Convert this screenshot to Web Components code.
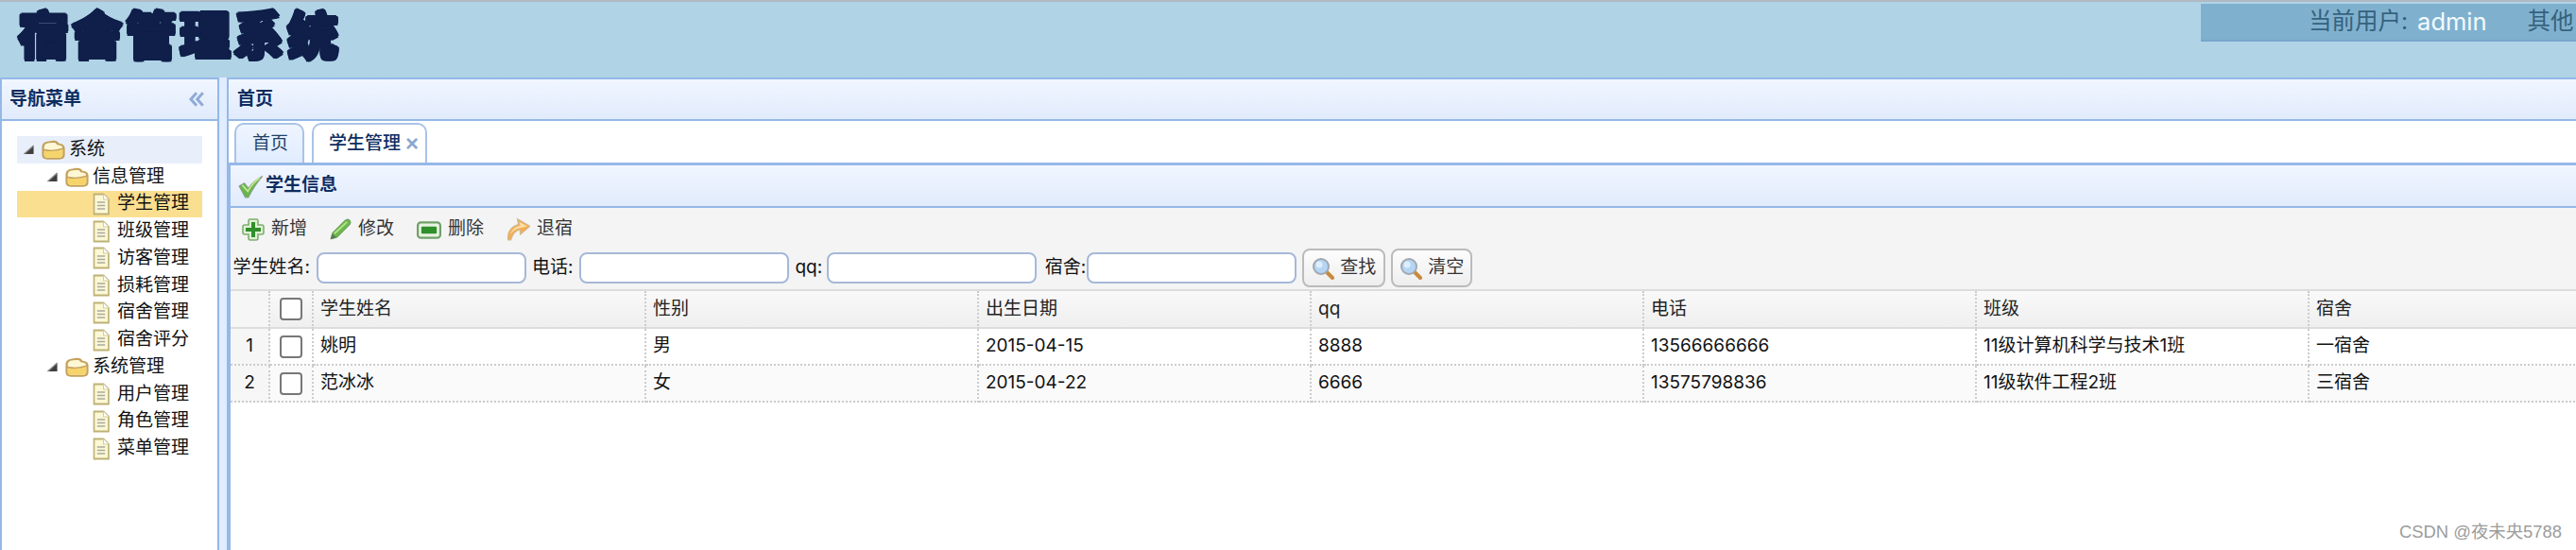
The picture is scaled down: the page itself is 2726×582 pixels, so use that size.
<!DOCTYPE html>
<html lang="zh">
<head>
<meta charset="utf-8">
<title>宿舍管理系统</title>
<style>
  html, body { margin: 0; height: 582px; overflow: hidden; }
  body {
    background: #e0ecff;
    color: #111;
    font: 19px/1.2 Inter, "Noto Sans CJK SC", sans-serif;
  }
  #page { display: flex; flex-direction: column; height: 582px; width: 2726px; overflow: hidden; position: relative; }
  #main { display: flex; gap: 8px; flex: 1; min-height: 0; }
</style>
</head>
<body>
<div id="page">
  <dorm-header></dorm-header>
  <div id="main">
    <panel-box heading="导航菜单" collapse style="width:232px">
      <tree-box>
        <tree-row kind="folder" depth="0" hover>系统</tree-row>
        <tree-row kind="folder" depth="1">信息管理</tree-row>
        <tree-row selected>学生管理</tree-row>
        <tree-row>班级管理</tree-row>
        <tree-row>访客管理</tree-row>
        <tree-row>损耗管理</tree-row>
        <tree-row>宿舍管理</tree-row>
        <tree-row>宿舍评分</tree-row>
        <tree-row kind="folder" depth="1">系统管理</tree-row>
        <tree-row>用户管理</tree-row>
        <tree-row>角色管理</tree-row>
        <tree-row>菜单管理</tree-row>
      </tree-box>
    </panel-box>
    <panel-box heading="首页" open-right style="flex:1;min-width:0">
      <tab-strip>
        <tab-item>首页</tab-item>
        <tab-item active closable>学生管理</tab-item>
      </tab-strip>
      <student-page></student-page>
    </panel-box>
  </div>
  <water-mark>CSDN @夜未央5788</water-mark>
</div>

<script>
(function () {
  // every icon sits in a 24x24 box, ui-icon scales it with its width/height attributes
  const icons = {
    arrow: '<path d="M23 2 L23 22 L1 22 Z" fill="#3f3f3f"/><path d="M23 2 L1 22" stroke="#8f8f8f" stroke-width="3"/>',
    folder: `<path d="M1.5 9 Q1.5 4 6 3 L12 2 Q15.5 2 16.5 5 L19 5.5 Q22.5 6.5 22.5 10 L22.5 18 Q22.5 22.5 18 22.5 L6 22.5 Q1.5 22.5 1.5 18 Z" fill="#fdf7d4" stroke="#c4a05a" stroke-width="2.2"/>
             <path d="M2.5 13 Q12 15 21.5 11 L21.5 18 Q21.5 21.5 18 21.5 L6 21.5 Q2.5 21.5 2.5 18 Z" fill="#f5d46c"/>
             <path d="M2 12 Q12 14.5 22 10.5" fill="none" stroke="#c4a05a" stroke-width="1.6"/>`,
    file: `<path d="M3 1.5 H15 L21.5 7 V22.5 H3 Z" fill="#fcf8d4" stroke="#bdb177" stroke-width="2"/>
           <path d="M15 1.5 V7 H21.5" fill="#fff" stroke="#d5cc9c" stroke-width="1.2"/>
           <path d="M7 10 H17 M7 13.5 H17 M7 17 H17" stroke="#a9a9a0" stroke-width="1.4"/>`,
    check: `<path d="M1 12 L6 9 L10 14 Q15 7 24 2 Q16 11 10 23 L7 23 Z" fill="#66b64c" stroke="#8a9f8a" stroke-width="1"/>
            <path d="M4 11 L9.5 17 Q14 9 21 4" fill="none" stroke="#c6e88a" stroke-width="1.6"/>`,
    plus: `<path d="M8 1 H16 Q17 1 17 3 V7 H21 Q23 7 23 9 V15 Q23 17 21 17 H17 V21 Q17 23 15 23 H9 Q7 23 7 21 V17 H3 Q1 17 1 15 V9 Q1 7 3 7 H7 V3 Q7 1 8 1 Z" fill="#dff0d4" stroke="#7fae70" stroke-width="1.6"/>
           <path d="M10 4 H14 V10 H20 V14 H14 V20 H10 V14 H4 V10 H10 Z" fill="#2f8f2a"/>`,
    pencil: `<path d="M1 23 L3 16 L17 2 Q20 0 22 2 Q24 5 22 7 L8 21 Z" fill="#6cb84e" stroke="#6c9a5c" stroke-width="1"/>
             <path d="M5 17 L19 4" stroke="#b7e08a" stroke-width="2"/>
             <path d="M1 23 L3 17 L7 21 Z" fill="#5b7a52"/>`,
    minus: `<rect x="1" y="5" width="22" height="15" rx="3" fill="#e8f3e2" stroke="#6fa066" stroke-width="2"/>
            <rect x="4.5" y="9" width="15" height="7" rx="1" fill="#2f8f2a"/>`,
    back: `<path d="M1.5 23 Q0 11 12 7 L11 1.5 L24 9 L14 17.5 L13.5 12.5 Q7 14 4.5 23 Z" fill="#f3ae55" stroke="#cdbb98" stroke-width="1"/>
           <path d="M3.5 18 Q6 10 14 8.5 L13 4.5 L21 9 L15 10.5 Q8 11 3.5 18 Z" fill="#fbdfa6"/>`,
    search: `<path d="M15 15 L22 22" stroke="#c98a3c" stroke-width="4" stroke-linecap="round"/>
             <circle cx="10" cy="10" r="8" fill="#b5d5f4" stroke="#a0a8b0" stroke-width="2"/>
             <circle cx="8" cy="8" r="3.5" fill="#dfeefc"/>`,
    collapse: `<path d="M12 3 L4 12 L12 21 M21 3 L13 12 L21 21" fill="none" stroke="#8fabd8" stroke-width="4"/>`
  };

  class UiIcon extends HTMLElement {
    connectedCallback() {
      const w = this.getAttribute('w') || 24;
      const h = this.getAttribute('h') || w;
      const root = this.attachShadow({mode: 'open'});
      root.innerHTML = `<style>:host { display: inline-flex; flex: none; } svg { display: block; }</style>
        <svg width="${w}" height="${h}" viewBox="0 0 24 24" preserveAspectRatio="none"
             xmlns="http://www.w3.org/2000/svg">${icons[this.getAttribute('name')] || ''}</svg>`;
    }
  }

  class DormHeader extends HTMLElement {
    constructor() {
      super();
      this.attachShadow({mode: 'open'}).innerHTML = `
        <style>
          :host {
            display: flex; flex: none; height: 80px;
            border-top: 2px solid #b1b9c3; background: #b0d3e6;
          }
          .logo {
            margin: 2px 0 0 19px; height: 70px; line-height: 70px; white-space: nowrap;
            font-family: "Liberation Sans", "Noto Sans CJK SC", sans-serif;
            font-size: 54px; font-weight: 900; letter-spacing: 3px; color: #0f1f4a;
            /* fat rounded letters, a text stroke would leave spikes here */
            text-shadow: 2px 0 #0f1f4a, -2px 0 #0f1f4a, 0 2px #0f1f4a, 0 -2px #0f1f4a,
              1.5px 1.5px #0f1f4a, -1.5px -1.5px #0f1f4a, 1.5px -1.5px #0f1f4a, -1.5px 1.5px #0f1f4a;
          }
          .user {
            margin: 2px 0 0 auto; box-sizing: border-box; width: 397px; height: 40px; padding-left: 114px;
            display: flex; align-items: center; white-space: nowrap; overflow: hidden;
            background: #7fb1cf; border-bottom: 2px solid #78a5cd; font-size: 24.5px; color: #36617d;
          }
          .name { color: #f3fbff; margin-left: 10px; font-size: 25.5px; }
          .other { margin-left: 43px; }
        </style>
        <div class="logo">宿舍管理系统</div>
        <div class="user"><span>当前用户:</span><span class="name">admin</span><span class="other">其他</span></div>`;
    }
  }

  const panelTpl = document.createElement('template');
  panelTpl.innerHTML = `
    <style>
      :host {
        display: flex; flex-direction: column; box-sizing: border-box; height: 100%; min-height: 0;
        border: 2px solid #95b8e7; border-bottom: 0; background: #fff; overflow: hidden;
      }
      :host([open-right]) { border-right: 0; }
      .head {
        flex: none; box-sizing: border-box; height: 44px; padding: 0 13px 0 8px;
        display: flex; align-items: center; justify-content: space-between;
        background: linear-gradient(#f1f6ff, #e1ebfc); border-bottom: 2px solid #95b8e7;
        font-weight: 700; color: #0e2d5f;
      }
      :host([open-right]) .head { padding-left: 9px; }
      .body { flex: 1; min-height: 0; display: flex; flex-direction: column; }
    </style>
    <div class="head"><span id="t"></span><ui-icon id="c" name="collapse" w="18" hidden></ui-icon></div>
    <div class="body"><slot></slot></div>`;

  class PanelBox extends HTMLElement {
    constructor() {
      super();
      this.attachShadow({mode: 'open'}).appendChild(panelTpl.content.cloneNode(true));
    }
    connectedCallback() {
      this.shadowRoot.getElementById('t').textContent = this.getAttribute('heading');
      if (!this.hasAttribute('collapse')) this.shadowRoot.getElementById('c').remove();
    }
  }

  class TreeBox extends HTMLElement {
    constructor() {
      super();
      this.attachShadow({mode: 'open'}).innerHTML = `
        <style>:host { display: block; padding: 16px 16px 0 16px; }</style><slot></slot>`;
    }
  }

  class TreeRow extends HTMLElement {
    connectedCallback() {
      const folder = this.getAttribute('kind') === 'folder';
      const depth = +this.getAttribute('depth') || 0;
      const lead = folder
        ? `<ui-icon name="arrow" w="11" class="a"></ui-icon><ui-icon name="folder" w="25" h="21" class="f"></ui-icon>`
        : `<ui-icon name="file" w="20" h="24" class="d"></ui-icon>`;
      this.attachShadow({mode: 'open'}).innerHTML = `
        <style>
          :host {
            display: flex; align-items: center; height: 28.75px; white-space: nowrap;
            padding-left: ${folder ? 7 + depth * 25 : 79}px;
          }
          :host([selected]) { background: #fbdf90; }
          :host([hover]) { background: #e8effb; }
          .a { margin-right: 8px; }
          .f { margin-right: 4px; }
          .d { margin-right: 7px; }
        </style>${lead}<slot></slot>`;
    }
  }

  class TabStrip extends HTMLElement {
    constructor() {
      super();
      this.attachShadow({mode: 'open'}).innerHTML = `
        <style>
          :host {
            display: flex; flex: none; gap: 8px; box-sizing: border-box; height: 47px;
            padding: 2px 0 0 6px; border-bottom: 3px solid #95b8e7;
          }
        </style><slot></slot>`;
    }
  }

  class TabItem extends HTMLElement {
    connectedCallback() {
      const close = this.hasAttribute('closable') ? '<span class="x">×</span>' : '';
      this.attachShadow({mode: 'open'}).innerHTML = `
        <style>
          :host {
            display: flex; align-items: center; box-sizing: border-box; height: 42px; padding: 0 15px 0 17px;
            border: 2px solid #a9c3e8; border-bottom: 0; border-radius: 10px 10px 0 0; white-space: nowrap;
            background: linear-gradient(#eff5ff, #e0ecff); color: #1f3f66;
          }
          :host([active]) { background: #fff; color: #0e2d5f; font-weight: 500; padding: 0 7px 0 16px; }
          .x {
            margin-left: 5px; color: #8aa7cf; font-weight: 700; line-height: 1;
            font-family: "Liberation Sans", sans-serif; font-size: 24px;
          }
        </style><slot></slot>${close}`;
    }
  }

  class ToolBtn extends HTMLElement {
    connectedCallback() {
      this.attachShadow({mode: 'open'}).innerHTML = `
        <style>
          :host { display: inline-flex; align-items: center; gap: 7px; color: #333; white-space: nowrap; }
        </style>
        <ui-icon name="${this.getAttribute('icon')}" w="${this.getAttribute('w') || 24}"></ui-icon><slot></slot>`;
    }
  }

  class SearchBtn extends HTMLElement {
    connectedCallback() {
      this.attachShadow({mode: 'open'}).innerHTML = `
        <style>
          :host {
            display: inline-flex; align-items: center; gap: 6px; box-sizing: border-box; height: 41px; padding: 0 8px;
            border: 2px solid #bbb; border-radius: 8px; color: #333; white-space: nowrap;
            background: linear-gradient(#fdfdfd, #eeeeee);
          }
        </style><ui-icon name="search"></ui-icon><slot></slot>`;
    }
  }

  class SearchField extends HTMLElement {
    connectedCallback() {
      this.attachShadow({mode: 'open'}).innerHTML = `
        <style>
          :host { display: inline-flex; align-items: center; gap: var(--label-gap, 7px); white-space: nowrap; }
          input {
            box-sizing: border-box; width: 222px; height: 33px; padding: 0 6px; margin: 0; outline: 0;
            border: 2px solid #a6b8d8; border-radius: 8px; background: #fff; font: inherit;
          }
        </style><slot></slot><input type="text">`;
    }
  }

  const pageTpl = document.createElement('template');
  pageTpl.innerHTML = `
    <style>
      :host {
        display: flex; flex-direction: column; flex: 1; min-height: 0;
        border-left: 2px solid #95b8e7;
      }
      .head {
        flex: none; box-sizing: border-box; height: 45px; padding-left: 8px; display: flex; align-items: center; gap: 3px;
        background: linear-gradient(#f1f6ff, #e1ebfc); border-bottom: 2px solid #95b8e7;
        font-weight: 700; color: #0e2d5f;
      }
      .tools { flex: none; box-sizing: border-box; height: 86px; padding-top: 2px; background: #f4f4f4; }
      .row1 { display: flex; align-items: center; gap: 24px; height: 41px; padding-left: 12px; }
      .row2 { display: flex; align-items: center; gap: 6px; height: 41px; padding-left: 2.5px; }
      .row2 .f4 { margin-left: 2.5px; }
      #grid-wrap { flex: 1; min-height: 0; }
    </style>
    <div class="head"><ui-icon name="check" w="26"></ui-icon><span>学生信息</span></div>
    <div class="tools">
      <div class="row1">
        <tool-btn icon="plus">新增</tool-btn>
        <tool-btn icon="pencil" w="23">修改</tool-btn>
        <tool-btn icon="minus" w="26">删除</tool-btn>
        <tool-btn icon="back" w="25">退宿</tool-btn>
      </div>
      <div class="row2">
        <search-field>学生姓名:</search-field>
        <search-field>电话:</search-field>
        <search-field style="--label-gap:5px">qq:</search-field>
        <search-field class="f4" style="--label-gap:1px">宿舍:</search-field>
        <search-btn>查找</search-btn>
        <search-btn style="padding:0 7px">清空</search-btn>
      </div>
    </div>
    <data-grid id="grid-wrap"></data-grid>`;

  class StudentPage extends HTMLElement {
    constructor() {
      super();
      this.attachShadow({mode: 'open'}).appendChild(pageTpl.content.cloneNode(true));
    }
  }

  const columns = ['学生姓名', '性别', '出生日期', 'qq', '电话', '班级', '宿舍'];
  const students = [
    ['姚明', '男', '2015-04-15', '8888', '13566666666', '11级计算机科学与技术1班', '一宿舍'],
    ['范冰冰', '女', '2015-04-22', '6666', '13575798836', '11级软件工程2班', '三宿舍']
  ];

  class DataGrid extends HTMLElement {
    connectedCallback() {
      const box = '<span class="cb"></span>';
      const head = `<div class="c n h"></div><div class="c k h">${box}</div>` +
        columns.map(t => `<div class="c h">${t}</div>`).join('');
      const rows = students.map((r, i) =>
        `<div class="c n r${i}">${i + 1}</div><div class="c k r${i}">${box}</div>` +
        r.map(t => `<div class="c r${i}">${t}</div>`).join('')).join('');
      this.attachShadow({mode: 'open'}).innerHTML = `
        <style>
          :host { display: block; overflow: hidden; border-top: 2px solid #ddd; }
          .g {
            display: grid; width: max-content;
            grid-template-columns: 42px 46px repeat(7, 352px);
            grid-auto-rows: 39px; grid-template-rows: 40px;
          }
          .c {
            box-sizing: border-box; display: flex; align-items: center; padding-left: 7px; white-space: nowrap;
            border-right: 2px dotted #ccc; border-bottom: 2px dotted #ccc;
          }
          .h { background: linear-gradient(#f9f9f9, #efefef); border-bottom: 2px solid #ddd; color: #222; }
          .r1 { background: #fafafa; }
          .n { justify-content: center; padding: 0; background: #f6f6f6; }
          .k { justify-content: center; padding: 0; }
          .cb {
            box-sizing: border-box; width: 24px; height: 24px; background: #fff;
            border: 2px solid #777; border-radius: 4px;
          }
        </style>
        <div class="g">${head}${rows}</div>`;
    }
  }

  class WaterMark extends HTMLElement {
    constructor() {
      super();
      this.attachShadow({mode: 'open'}).innerHTML = `
        <style>
          :host {
            position: absolute; right: 15px; bottom: 8px; white-space: nowrap;
            font-family: "Liberation Sans", "Noto Sans CJK SC", sans-serif; font-size: 18.4px; color: #9c9c9c;
          }
        </style><slot></slot>`;
    }
  }

  customElements.define('ui-icon', UiIcon);
  customElements.define('dorm-header', DormHeader);
  customElements.define('panel-box', PanelBox);
  customElements.define('tree-box', TreeBox);
  customElements.define('tree-row', TreeRow);
  customElements.define('tab-strip', TabStrip);
  customElements.define('tab-item', TabItem);
  customElements.define('tool-btn', ToolBtn);
  customElements.define('search-btn', SearchBtn);
  customElements.define('search-field', SearchField);
  customElements.define('data-grid', DataGrid);
  customElements.define('student-page', StudentPage);
  customElements.define('water-mark', WaterMark);
})();
</script>
</body>
</html>
